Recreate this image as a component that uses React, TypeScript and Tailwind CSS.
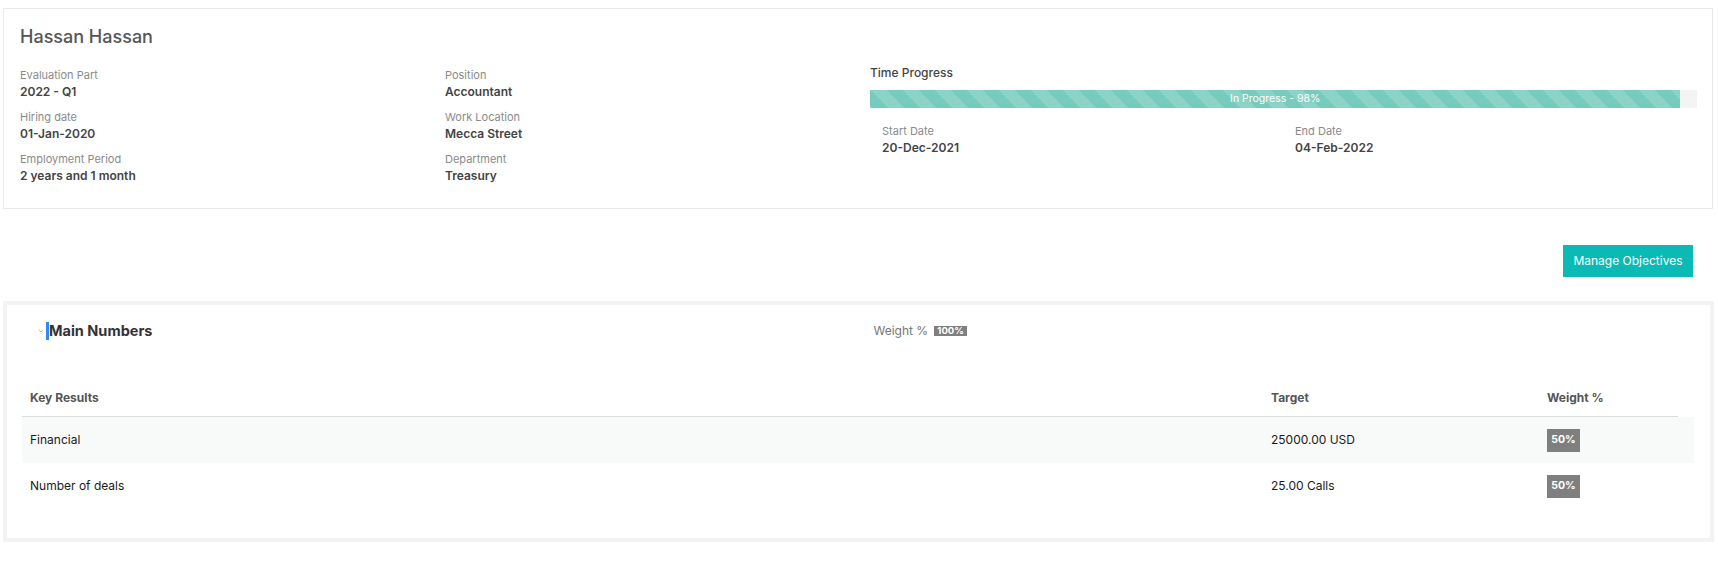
import { ChevronDown } from 'lucide-react';

const infoLeft = [
  { label: 'Evaluation Part', value: '2022 - Q1' },
  { label: 'Hiring date', value: '01-Jan-2020' },
  { label: 'Employment Period', value: '2 years and 1 month' },
];

const infoMid = [
  { label: 'Position', value: 'Accountant' },
  { label: 'Work Location', value: 'Mecca Street' },
  { label: 'Department', value: 'Treasury' },
];

const keyResults = [
  { name: 'Financial', target: '25000.00 USD', weight: '50%' },
  { name: 'Number of deals', target: '25.00 Calls', weight: '50%' },
];

function InfoItem({ label, value }: { label: string; value: string }) {
  return (
    <div className="mb-[8px]">
      <div className="text-[11px] leading-[16px] text-[#8a8a8a]">{label}</div>
      <div className="text-[12px] font-semibold leading-[18px] text-[#444]">{value}</div>
    </div>
  );
}

export default function App() {
  const progress = 98;

  return (
    <div className="h-[562px] w-full bg-white font-['Inter','Liberation_Sans',sans-serif]">
      <div className="mx-[3px] mr-[5px] mt-[8px] border border-[#e9e9e9] px-[16px] pb-[15px] pr-[15px] pt-[14px]">
        <h1 className="text-[18px] font-medium leading-[28px] text-[#555]">Hassan Hassan</h1>

        <div className="mt-[16px] grid grid-cols-[425px_425px_1fr]">
          <div>
            {infoLeft.map((item) => (
              <InfoItem key={item.label} {...item} />
            ))}
          </div>
          <div>
            {infoMid.map((item) => (
              <InfoItem key={item.label} {...item} />
            ))}
          </div>
          <div className="-mt-[2px]">
            <div className="text-[12px] font-medium leading-[16px] text-[#444]">Time Progress</div>
            <div className="mt-[9px] h-[18px] w-full bg-[#f4f4f4]">
              <div
                className="flex h-full items-center justify-center bg-[#77cbbc] bg-[linear-gradient(45deg,rgba(255,255,255,.15)_25%,transparent_25%,transparent_50%,rgba(255,255,255,.15)_50%,rgba(255,255,255,.15)_75%,transparent_75%,transparent)] bg-[length:32px_32px] text-[10.5px] text-white"
                style={{ width: `${progress}%` }}
              >
                In Progress - {progress}%
              </div>
            </div>
            <div className="mt-[15px] grid grid-cols-[413px_1fr] px-[12px]">
              <InfoItem label="Start Date" value="20-Dec-2021" />
              <InfoItem label="End Date" value="04-Feb-2022" />
            </div>
          </div>
        </div>
      </div>

      <div className="mr-[25px] mt-[36px] flex justify-end">
        <button
          type="button"
          className="h-[32px] w-[130px] bg-[#0bbab4] text-[12px] text-white"
        >
          Manage Objectives
        </button>
      </div>

      <div className="mx-[3px] mr-[4px] mt-[24px] border-[4px] border-[#f3f3f3] pb-[29px]">
        <div className="flex h-[52px] items-center">
          <ChevronDown className="ml-[30px] h-[8px] w-[8px] text-[#999]" strokeWidth={2} />
          <span className="ml-[1px] h-[18px] w-[3px] bg-[#2d8cf0]" />
          <span className="text-[14.5px] font-bold text-[#333]">Main Numbers</span>
          <div className="ml-[721px] flex items-center gap-[6px]">
            <span className="text-[12px] text-[#777]">Weight %</span>
            <span className="flex h-[10px] w-[33px] items-center justify-center bg-[#7f7f7f] text-[9.5px] font-bold leading-none text-white">
              100%
            </span>
          </div>
        </div>

        <div className="ml-[15px] mr-[16px] mt-[23px]">
          <div className="mr-[16px] grid h-[37px] grid-cols-[1241px_276px_1fr] items-center border-b border-[#dcdcdc] px-[8px] text-[12px] font-bold text-[#555]">
            <span>Key Results</span>
            <span>Target</span>
            <span>Weight %</span>
          </div>
          {keyResults.map((row, i) => (
            <div
              key={row.name}
              className={`grid h-[46px] grid-cols-[1241px_276px_1fr] items-center px-[8px] text-[12px] text-[#1a1a1a] ${
                i % 2 === 0 ? 'bg-[#f8f9f9]' : 'bg-white'
              }`}
            >
              <span>{row.name}</span>
              <span>{row.target}</span>
              <span>
                <span className="inline-flex h-[23px] w-[33px] items-center justify-center bg-[#7f7f7f] text-[10.5px] font-bold text-white">
                  {row.weight}
                </span>
              </span>
            </div>
          ))}
        </div>
      </div>
    </div>
  );
}
